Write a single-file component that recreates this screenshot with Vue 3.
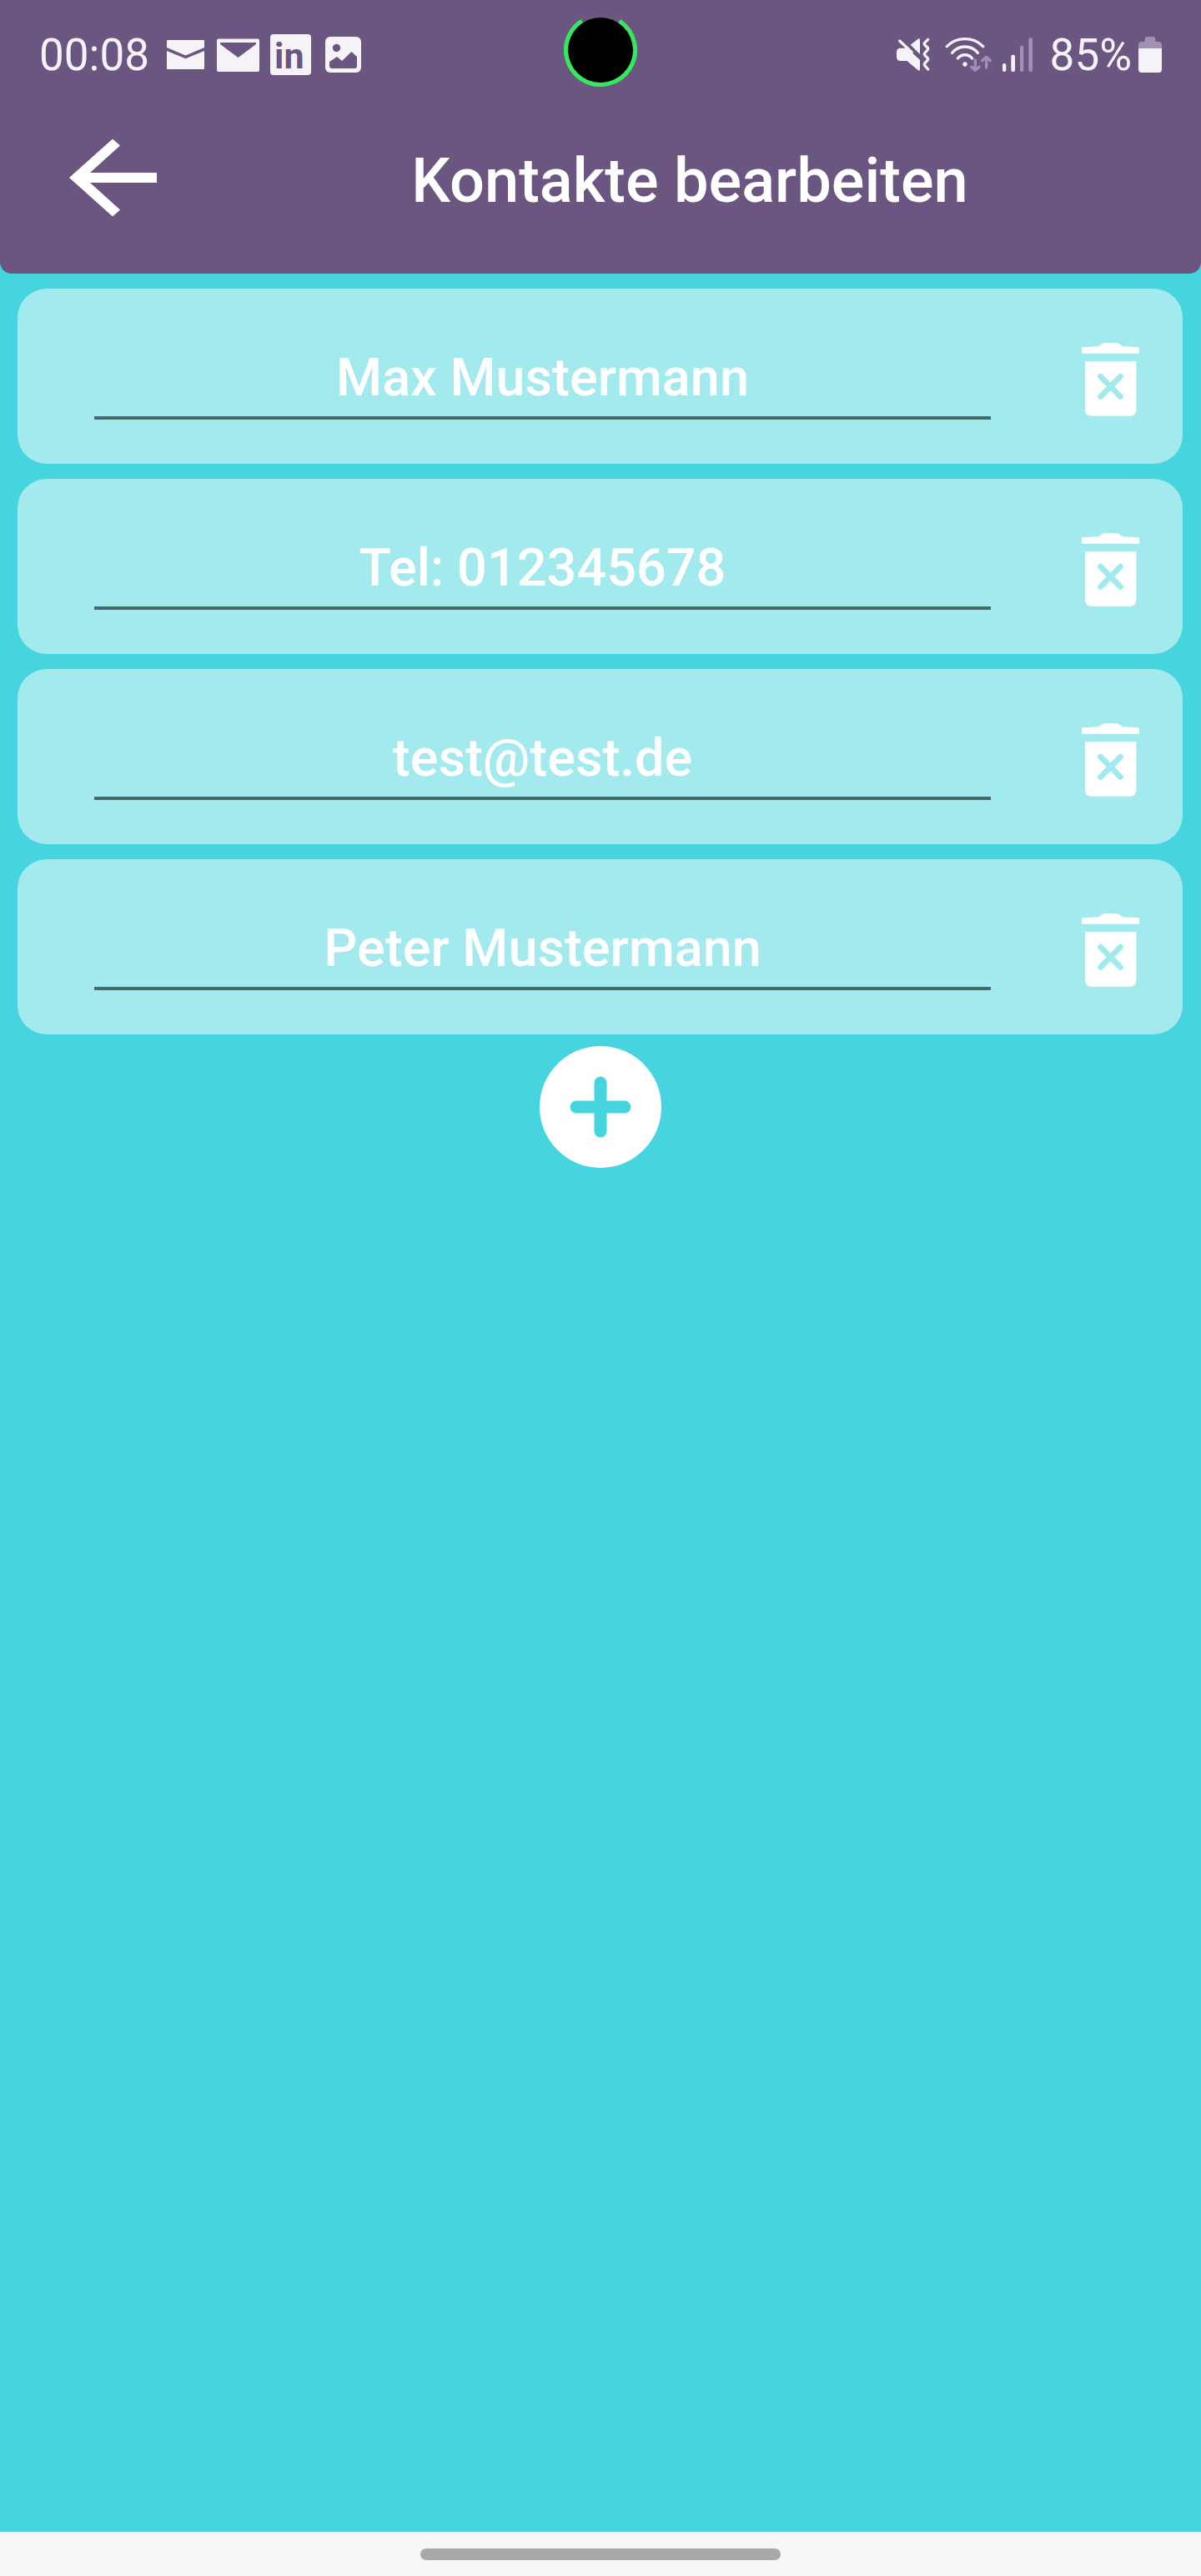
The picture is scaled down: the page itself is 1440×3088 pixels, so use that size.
<script setup>
import { ref } from 'vue'

const contacts = ref([
  { id: 1, value: 'Max Mustermann' },
  { id: 2, value: 'Tel: 012345678' },
  { id: 3, value: 'test@test.de' },
  { id: 4, value: 'Peter Mustermann' },
])

let nextId = 5

function addContact() {
  contacts.value.push({ id: nextId++, value: '' })
}

function removeContact(id) {
  contacts.value = contacts.value.filter((contact) => contact.id !== id)
}
</script>

<template>
  <div class="screen">
    <header class="header">
      <div class="status">
        <div class="status-left">
          <span class="status-text">00:08</span>
          <svg class="mail-open" width="45" height="50" viewBox="200 41 45 50" aria-hidden="true">
            <path d="M201 48H244Q245 48 245 49V57L222.500 66.500L200 57V49Q200 48 201 48Z" />
            <path d="M200 61L222.500 70.300L245 61V82Q245 83 244 83H201Q200 83 200 82Z" />
          </svg>
          <svg class="mail" width="51" height="50" viewBox="260 41 51 50" aria-hidden="true">
            <path
              fill-rule="evenodd"
              d="M262 46.500H309Q311 46.500 311 48.500V84Q311 86 309 86H262Q260 86 260 84V48.500Q260 46.500 262 46.500ZM264 51V53L285.500 69L307 53V51Z"
            />
          </svg>
          <svg class="linkedin" width="50" height="50" viewBox="0 0 50 50" role="img" aria-label="LinkedIn">
            <rect x="0" y="0" width="49" height="49" rx="4" />
            <text x="5" y="41">in</text>
          </svg>
          <svg width="43" height="50" viewBox="390 41 43 50" aria-hidden="true">
            <rect x="390" y="44" width="43" height="43" rx="6" />
            <circle class="cut" cx="403.500" cy="57.500" r="4.700" />
            <path class="cut" d="M395 74L404 68L410 73L421.500 62L428 68V79Q428 82 425 82H398Q395 82 395 79Z" />
          </svg>
        </div>

        <div class="status-right">
          <svg class="mute" width="40" height="50" viewBox="75 60 120 150" aria-hidden="true">
            <path d="M125 98L152 77Q159 72 159 80V132Z" />
            <path d="M112 110L159 152V186Q159 194 152 189L112 156H89Q75 156 75 142V124Q75 110 89 110Z" />
            <path class="line" d="M86 84L130 125" />
            <path class="line" d="M188 79L176 91Q173 95 177 99L186 108Q190 112 186 117L177 127Q173 131 177 136L186 145Q190 150 186 154L177 164Q173 168 177 173L188 186" />
          </svg>
          <svg class="wifi" width="57" height="50" viewBox="249 60 171 150" aria-hidden="true">
            <path class="line" d="M256 104A92 92 0 0 1 386 104" />
            <path class="line" d="M275 127A59 59 0 0 1 367 127" />
            <path class="line" d="M295 147A33 33 0 0 1 347 147" />
            <circle cx="321" cy="168" r="8" />
            <path class="line dim" d="M358 153V190M344 177L358 190L373 177" />
            <path class="line dim" d="M398 180V142M383 155L398 142L412 155" />
          </svg>
          <svg class="signal" width="36" height="50" viewBox="456 60 108 150" aria-hidden="true">
            <rect x="456" y="165" width="13" height="30" rx="6" />
            <rect x="487" y="134" width="14" height="61" rx="6" />
            <rect class="dim" x="519" y="101" width="13" height="94" rx="6" />
            <rect class="dim" x="550" y="73" width="14" height="122" rx="6" />
          </svg>
          <span class="status-text">85%</span>
          <svg class="battery" width="28" height="50" viewBox="945 60 84 150" aria-hidden="true">
            <path class="dim" d="M945 112V99Q945 87 957 87H968V77Q968 69 976 69H998Q1006 69 1006 77V87H1017Q1029 87 1029 99V112Z" />
            <path d="M945 111H1029V186Q1029 198 1017 198H957Q945 198 945 186Z" />
          </svg>
        </div>

        <svg class="camera" width="88" height="83" viewBox="-44 -39 88 83" aria-hidden="true">
          <circle class="lens" r="39" />
          <circle class="ring" r="41.500" />
        </svg>
      </div>

      <div class="app-bar">
        <button class="back" type="button" aria-label="Zurück">
          <svg width="105" height="100" viewBox="83 168 105 100" aria-hidden="true">
            <path d="M83 214L135 167.500L144 175.500L108 208H188V220H108L144 252.500L135 260.500Z" />
          </svg>
        </button>
        <h1 class="title">Kontakte bearbeiten</h1>
      </div>
    </header>

    <main class="content">
      <ul class="list">
        <li v-for="contact in contacts" :key="contact.id" class="card">
          <input v-model="contact.value" class="field" type="text" aria-label="Kontakt" />
          <button class="remove" type="button" aria-label="Kontakt löschen" @click="removeContact(contact.id)">
            <svg width="75" height="95" viewBox="162 230 225 285" aria-hidden="true">
              <path d="M171 258L228 255C240 253 238 242 260 242H290C312 242 308 253 322 255L378 258V280H171Z" />
              <path d="M183 308H367V483Q367 505 345 505H205Q183 505 183 483Z" />
              <path class="cross" d="M239 363L310 435M310 363L239 435" />
            </svg>
          </button>
        </li>
      </ul>

      <button class="add" type="button" aria-label="Kontakt hinzufügen" @click="addContact">
        <svg width="74" height="74" viewBox="0 0 74 74" aria-hidden="true">
          <path d="M37 8V66M8 37H66" />
        </svg>
      </button>
    </main>

    <footer class="nav"><div class="handle"></div></footer>
  </div>
</template>

<style>
body {
  margin: 0;
}
</style>

<style scoped>
.screen {
  --purple: #6b5682;
  --teal: #46d5df;
  --pale: #a3eaee;
  --ink: #f5f3f8;
  --faded: #a090b1;
  display: flex;
  flex-direction: column;
  min-height: 100vh;
  background: var(--teal);
  color: #fff;
  font-family: Roboto, "Liberation Sans", sans-serif;
}

button {
  display: flex;
  align-items: center;
  justify-content: center;
  margin: 0;
  padding: 0;
  border: 0;
  background: none;
  cursor: pointer;
}

svg {
  display: block;
  flex: none;
}

.header {
  padding-bottom: 26px;
  border-radius: 0 0 14px 14px;
  background: var(--purple);
}

.status {
  position: relative;
  display: flex;
  align-items: center;
  justify-content: space-between;
  height: 131px;
  padding: 0 47px;
}

.status svg {
  fill: var(--ink);
}

.status-left,
.status-right {
  display: flex;
  align-items: center;
}

.status-text {
  color: var(--ink);
  font-size: 53px;
  line-height: 64px;
}

.mail-open {
  margin: 0 15px 0 21px;
}

.mail {
  margin-right: 13px;
}

.linkedin {
  margin-right: 16px;
}

.linkedin text {
  fill: var(--purple);
  font-size: 43px;
  font-weight: 700;
}

.status .cut {
  fill: var(--purple);
}

.status .line {
  fill: none;
  stroke: var(--ink);
  stroke-width: 10;
  stroke-linecap: round;
  stroke-linejoin: round;
}

.status .line.dim {
  stroke: var(--faded);
}

.status .dim:not(.line) {
  fill: var(--faded);
}

.mute {
  margin-right: 18px;
}

.wifi {
  margin-right: 12px;
}

.signal {
  margin-right: 21px;
}

.battery {
  margin-left: 8px;
}

.camera {
  position: absolute;
  top: 21px;
  left: calc(50% - 44px);
}

.camera .ring {
  fill: none;
  stroke: #33ea5c;
  stroke-width: 5;
  stroke-dasharray: 213 48;
  transform: rotate(-57deg);
}

.camera .lens {
  fill: #000;
}

.app-bar {
  display: flex;
  align-items: center;
  height: 171px;
}

.back {
  padding: 0 26px 0 83px;
  fill: #fff;
}

.title {
  flex: 1;
  margin: 0;
  font-size: 74px;
  font-weight: 500;
  line-height: 88px;
  text-align: center;
}

.content {
  display: flex;
  flex: 1;
  flex-direction: column;
  align-items: center;
  gap: 14px;
  padding: 18px 22px 18px 21px;
}

.list {
  display: flex;
  flex-direction: column;
  align-self: stretch;
  gap: 18px;
  margin: 0;
  padding: 0;
  list-style: none;
}

.card {
  display: flex;
  align-items: center;
  gap: 106px;
  padding: 60px 49px 53px 92px;
  border-radius: 35px;
  background: var(--pale);
}

.field {
  box-sizing: border-box;
  flex: 1;
  min-width: 0;
  height: 97px;
  padding: 0;
  border: 0;
  border-bottom: 4px solid #44696b;
  border-radius: 0;
  outline: 0;
  background: none;
  color: #fff;
  font: 500 63px Roboto, "Liberation Sans", sans-serif;
  text-align: center;
}

.remove {
  fill: #fff;
}

.cross {
  stroke: var(--pale);
  stroke-width: 21;
  stroke-linecap: round;
}

.add {
  width: 146px;
  height: 146px;
  border-radius: 50%;
  background: #fff;
}

.add path {
  stroke: var(--teal);
  stroke-width: 15;
  stroke-linecap: round;
}

.nav {
  display: flex;
  align-items: center;
  justify-content: center;
  height: 53px;
  background: #f6f6f6;
}

.handle {
  width: 30%;
  height: 14px;
  border-radius: 7px;
  background: #a9a9a9;
}
</style>
